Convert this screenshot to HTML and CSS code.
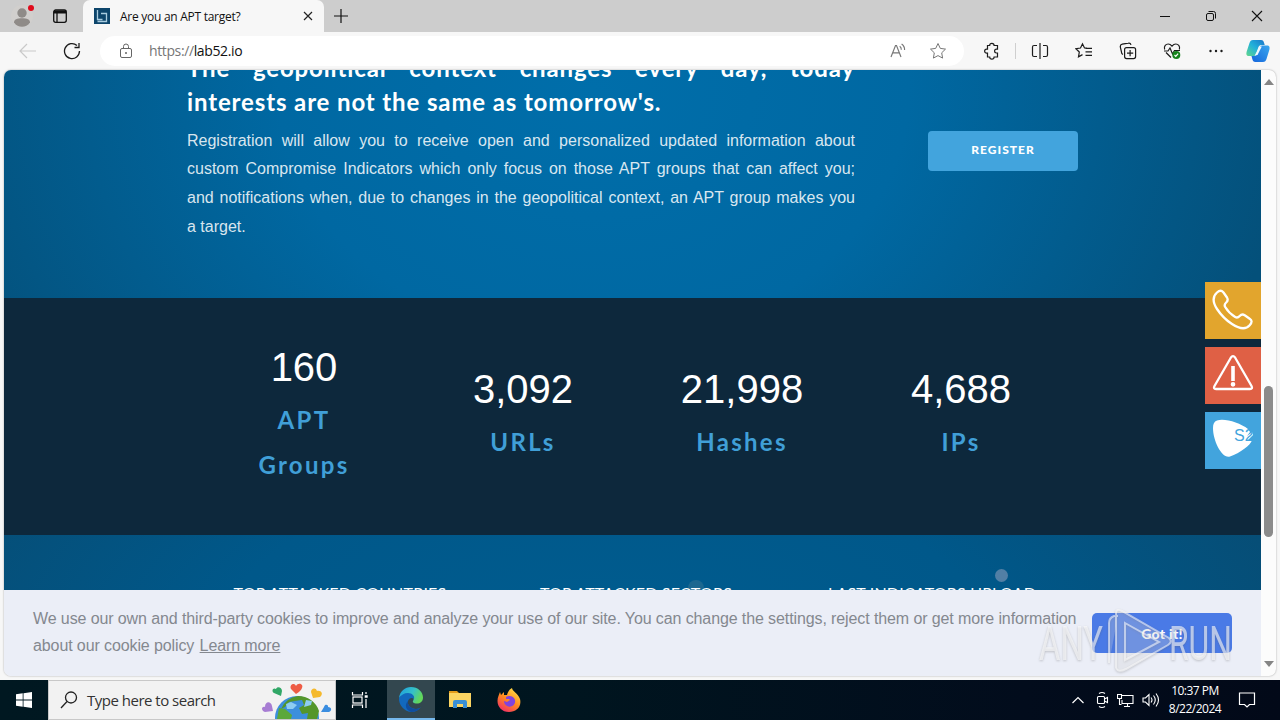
FILE: index.html
```html
<!DOCTYPE html>
<html lang="en">
<head>
    <meta charset="UTF-8">
    <meta name="viewport" content="width=device-width, initial-scale=1.0">
    <title>Are you an APT target?</title>
    <link rel="stylesheet" href="styles.css">
</head>
<body>
    <!-- Tab strip -->
    <div class="tab-strip">
        <div class="profile">
            <svg width="24" height="24" viewBox="0 0 24 24"><circle cx="12" cy="12" r="11" fill="#d1cfcd"/><circle cx="12" cy="9" r="4.7" fill="#8f8b88"/><path d="M4 18.5c0-3 3-4.3 8-4.3s8 1.300 8 4.300c-2 3-4.800 4.300-8 4.300s-6-1.300-8-4.300z" fill="#8f8b88"/><circle cx="21" cy="4" r="3" fill="#e00b1c"/></svg>
        </div>
        <div class="workspaces">
            <svg width="16" height="16" viewBox="0 0 16 16" fill="none" stroke="#111" stroke-width="1.3"><rect x="1.700" y="2" width="12.600" height="12.300" rx="2"/><path d="M2 4h12" stroke-width="3"/><path d="M5 4v10"/></svg>
        </div>
        <div class="tab">
            <svg width="16" height="16" viewBox="0 0 16 16"><path d="M0 0h16v16H0z" fill="#0d456b"/><path d="M3.500 2v9.500h5M7 5.500h5.500v8H3.500" fill="none" stroke="#a9ccdf" stroke-width="1.300"/></svg>
            <span class="tab-title">Are you an APT target?</span>
            <svg width="10" height="10" viewBox="0 0 10 10" stroke="#222" stroke-width="1.200"><path d="M1 1l8 8M9 1L1 9"/></svg>
        </div>
        <div class="new-tab">
            <svg width="14" height="14" viewBox="0 0 14 14" stroke="#111" stroke-width="1.200"><path d="M7 0v14M0 7h14"/></svg>
        </div>
        <div class="window-buttons">
            <svg width="12" height="12" viewBox="0 0 12 12" fill="none" stroke="#111"><path d="M1 6.500h10"/></svg>
            <svg width="12" height="12" viewBox="0 0 12 12" fill="none" stroke="#111"><rect x="1.500" y="3.500" width="7" height="7" rx="1.500"/><path d="M3.500 1.500H8.500a2 2 0 0 1 2 2v5"/></svg>
            <svg width="12" height="12" viewBox="0 0 12 12" fill="none" stroke="#111" stroke-width="1.100"><path d="M1 1l10 10M11 1L1 11"/></svg>
        </div>
    </div>

    <!-- Toolbar -->
    <div class="toolbar">
        <svg class="back" width="18" height="16" viewBox="0 0 18 16" fill="none" stroke="#c9c9c9" stroke-width="1.200"><path d="M8 1L1 8l7 7M1 8h16"/></svg>
        <svg class="reload" width="18" height="18" viewBox="0 0 18 18" fill="none" stroke="#1c1c1c" stroke-width="1.300"><path d="M16.500 9A7.500 7.500 0 1 1 14 3.500M16 1v4.500h-4.500"/></svg>
        <div class="address-bar">
            <svg width="14" height="16" viewBox="0 0 14 16" fill="none" stroke="#666"><rect x="1.500" y="5.500" width="11" height="9" rx="1.500"/><path d="M4.500 5.500V3.500a2.500 2.500 0 0 1 5 0v2"/><circle cx="7" cy="10" r=".6" fill="#666"/></svg>
            <div class="url"><span>https://</span><span class="host">lab52.io</span></div>
            <svg class="read-aloud" width="17" height="16" viewBox="0 0 17 16" fill="none" stroke="#777" stroke-width="1.150"><path d="M1 14L5.500 2.500h1L11 14M2.700 9.800h6.600M9.700 3.200a4 4 0 0 1 1.600 3.500M11.600 1a7 7 0 0 1 3 6"/></svg>
            <svg width="18" height="18" viewBox="0 0 18 18" fill="none" stroke="#777"><path d="M9 1.500l2.300 4.900 5.200.7-3.800 3.700.9 5.300L9 13.600l-4.600 2.500.9-5.300L1.500 7.100l5.200-.7z"/></svg>
        </div>
        <div class="tools">
            <svg width="18" height="18" viewBox="0 0 18 18" fill="none" stroke="#1c1c1c" stroke-width="1.200"><path d="M5.500 3.500h2.200a2.200 2.200 0 0 1 4.400 0h3.400v3.700h-1a1.900 1.900 0 0 0 0 3.800h1v4h-3.400a2.200 2.200 0 0 1-4.400 0H5.500v-3.800h-.8a2.050 2.050 0 0 1 0-4.100h.8z"/></svg>
            <i class="divider"></i>
            <svg width="18" height="18" viewBox="0 0 18 18" fill="none" stroke="#1c1c1c" stroke-width="1.200"><path d="M6 3.500H3a1.500 1.500 0 0 0-1.500 1.500v8A1.500 1.500 0 0 0 3 14.500h3M12 3.500h3A1.500 1.500 0 0 1 16.500 5v8a1.500 1.500 0 0 1-1.500 1.500h-3M9 1v16"/></svg>
            <svg width="18" height="18" viewBox="0 0 18 18" fill="none" stroke="#1c1c1c" stroke-width="1.200"><path d="M12 6H9.500L7.500 1.800 5.500 6l-4.600.7 3.400 3.300-.8 4.800 4-2.200M10.500 6.300H17M10.500 9.800H17M10.500 13.300H17"/></svg>
            <svg width="18" height="18" viewBox="0 0 18 18" fill="none" stroke="#1c1c1c" stroke-width="1.200"><path d="M4 12.500A2.500 2.500 0 0 1 2.500 10L1.300 5a2.500 2.500 0 0 1 2-2.800l6-1.100A2.300 2.300 0 0 1 12 2.800"/><rect x="5.600" y="5.600" width="11" height="11" rx="2"/><path d="M11.100 8v6.200M8 11.100h6.200"/></svg>
            <svg width="18" height="18" viewBox="0 0 18 18" fill="none" stroke="#1c1c1c" stroke-width="1.200"><path d="M1.600 7.500C.7 4 3 2 5.200 2 7 2 8.200 3.200 9 4.200 9.800 3.200 11 2 12.800 2 15 2 17.300 4 16.400 7.500M3 10.500l5 5M1 9h4l2-3 2.500 6 2-3.500H17"/><circle cx="13.300" cy="13" r="4" fill="#16831c" stroke="none"/><path d="M11.500 13l1.300 1.400 2.300-2.700" stroke="#fff"/></svg>
            <svg width="18" height="18" viewBox="0 0 18 18" fill="#1c1c1c"><circle cx="3.500" cy="9" r="1.200"/><circle cx="9" cy="9" r="1.200"/><circle cx="14.500" cy="9" r="1.200"/></svg>
            <svg class="copilot" width="24" height="24" viewBox="0 0 24 24">
                <defs>
                    <linearGradient id="cp1" x1="1" y1="0" x2="0" y2="1"><stop offset="0" stop-color="#1a74c9"/><stop offset=".5" stop-color="#22b1da"/><stop offset="1" stop-color="#62d78b"/></linearGradient>
                    <linearGradient id="cp2" x1="1" y1="0" x2="0" y2="1"><stop offset="0" stop-color="#39a7ee"/><stop offset="1" stop-color="#1565dc"/></linearGradient>
                </defs>
                <path d="M7 1h8c2 0 2.600 1 3.100 3l.6 2h-3c-2 0-3 1-3.600 3l-2 6c-.5 1.500-1.300 2-3 2H3c-2.700 0-3-2-2.300-4.500L3.500 4C4.200 2 5 1 7 1z" fill="url(#cp1)"/>
                <path d="M17 23H9.500c-2 0-2.700-1-3.200-3L5.500 17h2.800c2 0 2.800-1 3.400-3l2-5.500C14.300 7 15 6.500 17 6.500h4c2.600 0 3 2 2.300 4.500L20.500 20c-.7 2-1.500 3-3.500 3z" fill="url(#cp2)"/>
                <path d="M13.500 7.500h2.300L11.500 16H9z" fill="#eef9ff"/>
            </svg>
        </div>
    </div>

    <!-- Web page -->
    <div class="browser-view">
        <div class="page">
            <section class="hero">
                <div class="hero-text">
                    <h2><span class="line full">The geopolitical context changes every day, today</span><span class="line">interests are not the same as tomorrow's.</span></h2>
                    <p>
                        <span class="line full">Registration will allow you to receive open and personalized updated information about</span>
                        <span class="line full">custom Compromise Indicators which only focus on those APT groups that can affect you;</span>
                        <span class="line full">and notifications when, due to changes in the geopolitical context, an APT group makes you</span>
                        <span class="line">a target.</span>
                    </p>
                </div>
                <button class="register">REGISTER</button>
            </section>

            <section class="stats">
                <div class="stat">
                    <div class="number">160</div>
                    <div class="label">APT<br>Groups</div>
                </div>
                <div class="stat">
                    <div class="number">3,092</div>
                    <div class="label">URLs</div>
                </div>
                <div class="stat">
                    <div class="number">21,998</div>
                    <div class="label">Hashes</div>
                </div>
                <div class="stat">
                    <div class="number">4,688</div>
                    <div class="label">IPs</div>
                </div>
            </section>

            <section class="rankings">
                <i class="particle faint"></i>
                <i class="particle"></i>
                <h3>TOP ATTACKED COUNTRIES</h3>
                <h3>TOP ATTACKED SECTORS</h3>
                <h3>LAST INDICATORS UPLOAD</h3>
            </section>

            <div class="cookie-bar">
                <div class="cookie-text">
                    <span class="line">We use our own and third-party cookies to improve and analyze your use of our site. You can change the settings, reject them or get more information</span>
                    <span class="line">about our cookie policy <a>Learn more</a></span>
                </div>
                <button class="accept">Got it!</button>
            </div>

            <div class="side-tabs">
                <div class="side-tab phone">
                    <svg width="42" height="42" viewBox="0 0 42 42" fill="none" stroke="#fff" stroke-width="2.300" stroke-linejoin="round"><path d="M5 3.500C8 .8 10 1.500 11.500 3.500l3.500 5c1.200 2 .5 3.800-.8 5-1.700 1.500-2.200 2.500-1 4.500 2.500 4.200 5.800 7.500 10 10 2 1.200 3 .7 4.500-1 1.200-1.300 3-2 5-.8l5 3.500c2.300 1.500 2.700 3.500 0 6.500-3.500 4-9.700 4-17.700-1.200C13 30.500 9 26 5 20 .2 12.500 1 7 5 3.500z"/></svg>
                </div>
                <div class="side-tab alert">
                    <svg width="42" height="42" viewBox="0 0 42 42" fill="none" stroke="#fff" stroke-width="2.300" stroke-linejoin="round"><path d="M18.800 3.700L2.500 32q-1.500 3 1.500 3h34Q41 35 39.500 32L23.200 3.700q-2.200-3.200-4.400 0z"/><path d="M21 12v15" stroke-width="3.600"/><circle cx="21" cy="30.300" r="1.200"/></svg>
                </div>
                <div class="side-tab s2">
                    <svg width="42" height="42" viewBox="0 0 42 42"><path d="M5 1.500C13-1 28 4 36 10l2 3-3 4 5.500-4L41 16l-5 5h4c-1 5-12 13-22 16.500C10 40 1 22 1 9c0-4 1-6.500 4-7.500z" fill="#fff"/><text x="22" y="21.500">S2</text></svg>
                </div>
            </div>
        </div>
        <div class="scrollbar">
            <i class="arrow up"></i>
            <i class="thumb"></i>
            <i class="arrow down"></i>
        </div>
    </div>

    <!-- Taskbar -->
    <div class="taskbar">
        <div class="task start">
            <svg width="16" height="16" viewBox="0 0 16 16" fill="#fff"><path d="M0 2.200l6.700-.9v6.300H0zM7.500 1.200L16 0v7.600H7.500zM0 8.400h6.700v6.300L0 13.800zM7.500 8.400H16V16l-8.500-1.200z"/></svg>
        </div>
        <div class="search">
            <svg width="18" height="18" viewBox="0 0 18 18" fill="none" stroke="#222" stroke-width="1.300"><circle cx="11" cy="6.500" r="5.500"/><path d="M7 10.500L1 17"/></svg>
            <span>Type here to search</span>
            <svg class="globe" width="72" height="38" viewBox="0 0 72 38">
                <circle cx="36" cy="37" r="22" fill="#3d8fdc"/>
                <path d="M37 15a22 22 0 0 1 21 15l-2 8H46l1-6-6 1-3-6 5-3-2-5-7 1-6 1-4 5-4 2a22 22 0 0 1 17-13z" fill="#54962a"/>
                <path d="M18 27l6 1 7 6-1 4H16z" fill="#5ba83a"/><path d="M25 23l5-2 6 3-4 4h-6zM45 19l6 1-1 4-7 2z" fill="#8ecdf2"/>
                <path d="M35 13l-5-5c-2-4 3-7 5-3 2-4 8-2 6 2q-1 3-6 6z" fill="#ee5c45"/>
                <path d="M20 15l-7-3c-3-2-1-6 2-4 1-3 6-2 6 2z" fill="#31a766"/>
                <path d="M52 17l-2-6c0-4 5-5 6-1 4-1 7 3 3 6z" fill="#f5b92c"/>
                <path d="M12 30l-8 1c-4-1-4-6 0-5 0-6 6-6 7-1z" fill="#a77dd3"/>
                <path d="M60 31l3-5c1-4 5-2 4 0 4 0 4 4 1 5z" fill="#3a8de0"/>
            </svg>
        </div>
        <div class="task view">
            <svg width="18" height="18" viewBox="0 0 18 18" fill="none" stroke="#fff" stroke-width="1.200"><path d="M1.500 1v3h10V1M1.500 17v-3h10v3M15 1v2M15 8v9"/><rect x="2" y="6" width="9" height="6"/><path d="M13.700 5.500h3" stroke-width="2.500"/></svg>
        </div>
        <div class="task active">
            <svg width="26" height="26" viewBox="0 0 26 26">
                <defs><linearGradient id="edge" x1="0" y1="0" x2="1" y2=".4"><stop offset="0" stop-color="#1b9de2"/><stop offset=".6" stop-color="#35c1c8"/><stop offset="1" stop-color="#62d75b"/></linearGradient></defs>
                <path d="M1 12C2 5 7 1 13 1c7 0 12 5 12 10.500 0 4-3 6-6 6-3.500 0-5-1.500-3.700-3C17 11 14 8 10 8c-4 0-7 2-9 4z" fill="url(#edge)"/>
                <path d="M1 12c2-3 5-5 9-5 4 0 7 3 6 6-2-2-5-1-6 2-1 4 3 8 8 8 2 0 4-1 5-2-2 3-6 5-10 5C6 25 .5 19 1 12z" fill="#1269bd"/>
                <path d="M10 15c-1 4 3 8 8 8 2 0 4-1 5-2-2 3-6 5-10 5-5-2-7-7-3-11z" fill="#104d9d"/>
            </svg>
        </div>
        <div class="task">
            <svg width="22" height="20" viewBox="0 0 22 20"><path d="M0 1h8l2 2H0z" fill="#e39b1a"/><path d="M0 3h22v14H0z" fill="#fbd462"/><path d="M4 18v-6q0-2 2-2h10q2 0 2 2v6h-4v-4H8v4z" fill="#3a8fd4"/></svg>
        </div>
        <div class="task">
            <svg width="24" height="26" viewBox="0 0 24 26">
                <defs><linearGradient id="fox" x1=".8" y1="0" x2=".2" y2="1"><stop offset="0" stop-color="#ffe24a"/><stop offset=".5" stop-color="#ff8a1f"/><stop offset="1" stop-color="#f0296a"/></linearGradient></defs>
                <path d="M3 5l1 3 3-3v3h3c1-4 3-6 5-7 0 3 6 5 8 11 2 8-4 13-11 13C5 25 .5 20 .5 14 .5 10 2 8 3 5z" fill="url(#fox)"/>
                <path d="M9 10c3-2 8-1 9 3 1 5-4 8-8 6-2-1-3-3-3-5l3 1 3-2-1-1H9z" fill="#8043dd"/>
            </svg>
        </div>
        <div class="tray">
            <svg width="12" height="8" viewBox="0 0 12 8" fill="none" stroke="#fff" stroke-width="1.200"><path d="M.5 7L6 1.500 11.500 7"/></svg>
            <svg class="meet" width="13" height="18" viewBox="0 0 13 18" fill="none" stroke="#fff" stroke-width="1.100"><rect x="1.500" y="5.500" width="7" height="7" rx="1"/><path d="M8.500 8l3-1.500v5l-3-1.500M3 2.500Q6 .5 9 2.500M3 15.500q3 2 6 0"/></svg>
            <svg width="17" height="16" viewBox="0 0 17 16" fill="none" stroke="#fff" stroke-width="1.100"><path d="M5 3.500h11v8H5V8M10.500 11.500v3M7 14.500h6M.5 2.500h4v4h-4zM2.500 6.500v6h2"/></svg>
            <svg width="18" height="16" viewBox="0 0 18 16" fill="none" stroke="#fff" stroke-width="1.100"><path d="M1 6h2.500L7 2.500v11L3.500 10H1zM9 5.500q2 2.500 0 5M11.500 3.500q3.500 4.500 0 9M14 1.500q5 6.500 0 13"/></svg>
            <div class="clock">10:37 PM<br>8/22/2024</div>
            <svg class="notify" width="18" height="18" viewBox="0 0 18 18" fill="none" stroke="#fff" stroke-width="1.200"><path d="M1.500 2h15v11.500h-5L9 16l-2.500-2.500h-5z"/></svg>
        </div>
    </div>

    <!-- Watermark -->
    <svg class="watermark" width="200" height="66" viewBox="0 0 200 66">
        <text x="3" y="52" textLength="64" lengthAdjust="spacingAndGlyphs">ANY</text>
        <path d="M73 55V15q0-5 5-7h4M80 60V5q0-5 6-2l47 27q4 4-1 7L90 61q-8 4-10-1M89 15l34 19-34 18z"/>
        <text x="133" y="52" textLength="63" lengthAdjust="spacingAndGlyphs">RUN</text>
    </svg>
</body>
</html>
```
FILE: styles.css
```css
* {
    margin: 0;
    padding: 0;
    box-sizing: border-box;
}

body {
    position: relative;
    width: 1280px;
    height: 720px;
    overflow: hidden;
    display: flex;
    flex-direction: column;
    background: #f7f7f7;
    font-family: "Open Sans", "Noto Sans", sans-serif;
}

svg {
    display: block;
    flex: none;
}

button {
    border: 0;
    color: #fff;
    font-family: Lato, sans-serif;
    font-weight: 900;
}

.line {
    display: block;
    white-space: nowrap;
}

.line.full {
    text-align-last: justify;
}

/* Tab strip */
.tab-strip {
    height: 32px;
    flex: none;
    display: flex;
    align-items: center;
    background: #cdcdcd;
}

.profile {
    width: 42px;
    padding-left: 10px;
}

.workspaces {
    width: 41px;
    padding-left: 10px;
}

.tab {
    width: 241px;
    height: 32px;
    padding: 0 11px;
    display: flex;
    align-items: center;
    background: #f7f7f7;
    border-radius: 7px 7px 0 0;
}

.tab-title {
    flex: 1;
    margin-left: 10px;
    font-size: 12px;
    letter-spacing: -0.27px;
    color: #111;
}

.new-tab {
    margin-left: 10px;
}

.window-buttons {
    margin-left: auto;
    padding-right: 17px;
    display: flex;
    gap: 34px;
}

/* Toolbar */
.toolbar {
    height: 38px;
    flex: none;
    display: flex;
    align-items: center;
    background: #f7f7f7;
}

.back {
    margin-left: 19px;
}

.reload {
    margin-left: 26px;
}

.address-bar {
    width: 864px;
    height: 30px;
    margin-left: 19px;
    padding: 0 17px 0 19px;
    display: flex;
    align-items: center;
    background: #fff;
    border-radius: 15px;
}

.url {
    flex: 1;
    display: flex;
    margin-left: 16px;
    font-size: 14px;
    line-height: 20px;
    letter-spacing: -0.38px;
    color: #767676;
}

.host {
    color: #111;
}

.read-aloud {
    margin-right: 22px;
}

.tools {
    flex: 1;
    display: flex;
    align-items: center;
    justify-content: space-between;
    padding: 0 10px 0 18px;
}

.divider {
    width: 1px;
    height: 16px;
    margin: 0 -11px;
    background: #cfcfcf;
}

.copilot {
    margin-left: -5px;
}

/* Web page */
.browser-view {
    width: 1272px;
    height: 606px;
    margin: 0 4px 4px;
    flex: none;
    display: flex;
    overflow: hidden;
    border-radius: 7px;
    background: #fcfcfc;
    box-shadow: 0 0 2px rgba(0, 0, 0, 0.35);
}

.page {
    position: relative;
    width: 1257px;
    height: 606px;
    overflow: hidden;
}

.hero {
    height: 228px;
    display: flex;
    align-items: flex-start;
    padding-left: 183px;
    background: radial-gradient(ellipse 700px 560px at 590px 20px, #006eaa 0%, #0068a2 45%, #04507a 100%);
    color: #fff;
}

.hero-text {
    width: 668px;
    margin-top: -19px;
}

.hero h2 {
    font-family: Lato, sans-serif;
    font-size: 24px;
    font-weight: 700;
    line-height: 34px;
    letter-spacing: 0.87px;
}

.hero p {
    margin-top: 7.6px;
    font-family: "Liberation Sans", Arial, sans-serif;
    font-size: 16px;
    line-height: 28.7px;
    color: rgba(255, 255, 255, 0.86);
}

.register {
    width: 150px;
    height: 40px;
    margin: 61px 0 0 73px;
    padding-bottom: 3px;
    border-radius: 4px;
    background: #42a4dd;
    font-size: 12px;
    letter-spacing: 1px;
}

.stats {
    height: 237px;
    padding: 0 190.5px 2px;
    display: grid;
    grid-template-columns: repeat(4, 219px);
    align-items: center;
    background: #0d283c;
    text-align: center;
}

.number {
    margin-bottom: 8px;
    font-family: "Liberation Sans", Arial, sans-serif;
    font-size: 40px;
    line-height: 44px;
    color: #fff;
}

.label {
    font-family: Lato, sans-serif;
    font-size: 24px;
    font-weight: 700;
    line-height: 45px;
    letter-spacing: 2.3px;
    color: #409fd7;
}

.rankings {
    position: relative;
    height: 55px;
    overflow: hidden;
    display: grid;
    grid-template-columns: repeat(3, 296px);
    padding: 48px 0 0 188px;
    background: radial-gradient(ellipse 750px 300px at 600px 90px, #005c8f 0%, #00588a 50%, #074c73 100%);
    text-align: center;
}

.rankings h3 {
    position: relative;
    font-family: Lato, sans-serif;
    font-size: 16px;
    font-weight: 400;
    line-height: 20px;
    letter-spacing: 0.2px;
    color: #fff;
    white-space: nowrap;
}

.particle {
    position: absolute;
    left: 991px;
    top: 34px;
    width: 13px;
    height: 13px;
    border-radius: 50%;
    background: #527fa5;
}

.particle.faint {
    left: 684px;
    top: 45px;
    width: 16px;
    height: 16px;
    background: #1c6890;
}

.cookie-bar {
    height: 86px;
    padding: 0 29px;
    display: flex;
    align-items: center;
    justify-content: space-between;
    background: #ebeef7;
}

.cookie-text {
    width: 1043px;
    padding-bottom: 2px;
    font-family: "Liberation Sans", Arial, sans-serif;
    font-size: 16px;
    line-height: 27px;
    letter-spacing: -0.105px;
    color: #84888f;
}

.cookie-text a {
    margin-left: 1px;
    text-decoration: underline;
}

.accept {
    width: 140px;
    height: 40px;
    border-radius: 5px;
    background: #4a7ae6;
    font-size: 14px;
    letter-spacing: 0.3px;
}

/* Floating contact buttons */
.side-tabs {
    position: absolute;
    right: 0;
    top: 212px;
    display: flex;
    flex-direction: column;
    gap: 8px;
}

.side-tab {
    width: 56px;
    height: 57px;
    padding: 7px;
}

.phone {
    background: #e2a52d;
}

.alert {
    background: #df6045;
}

.s2 {
    background: #42a4dd;
}

.s2 text {
    font-family: "Liberation Sans", sans-serif;
    font-size: 16px;
    fill: #42a4dd;
}

/* Scrollbar */
.scrollbar {
    width: 15px;
    display: flex;
    flex-direction: column;
    align-items: center;
}

.arrow {
    border: 5px solid transparent;
}

.arrow.up {
    border-bottom-color: #858585;
    border-top-width: 0;
    border-bottom-width: 6px;
    margin-top: 9px;
}

.arrow.down {
    margin: auto 0 9px;
    border-top-color: #858585;
    border-bottom-width: 0;
    border-top-width: 6px;
}

.thumb {
    width: 9px;
    height: 151px;
    margin-top: 301px;
    border-radius: 5px;
    background: #8b8b8b;
}

/* Taskbar */
.taskbar {
    height: 40px;
    flex: none;
    display: flex;
    background: linear-gradient(90deg, #001821 0%, #00151f 45%, #020c1c 80%, #020918 100%);
    color: #fff;
}

.task {
    width: 49px;
    height: 40px;
    display: flex;
    align-items: center;
    justify-content: center;
}

.task.start {
    width: 48px;
}

.task.view {
    width: 47px;
    margin-right: 4px;
}

.task.active {
    width: 48px;
    background: #33474f;
    border-bottom: 2px solid #76b9ed;
}

.search {
    width: 288px;
    padding-left: 11px;
    display: flex;
    align-items: center;
    background: #f2f2f2;
    border: 1px solid #c8c8c8;
    color: #333;
    font-size: 15px;
    letter-spacing: -0.5px;
}

.search span {
    margin-left: 9px;
    white-space: nowrap;
}

.globe {
    margin-left: auto;
    margin-right: 2px;
}

.tray {
    margin-left: auto;
    padding-right: 24px;
    display: flex;
    align-items: center;
}

.tray svg + svg {
    margin-left: 8px;
}

.tray svg + svg.meet {
    margin-left: 12px;
}

.clock {
    width: 70px;
    font-size: 12px;
    line-height: 18px;
    letter-spacing: -0.5px;
    text-align: center;
}

.notify {
    margin-left: 8px;
}

/* Watermark */
.watermark {
    position: absolute;
    left: 1036px;
    top: 608px;
    filter: drop-shadow(0 1px 1px rgba(90, 90, 90, 0.5));
}

.watermark text {
    font-family: Roboto, sans-serif;
    font-size: 48px;
    fill: rgba(255, 255, 255, 0.6);
}

.watermark path {
    fill: rgba(255, 255, 255, 0.2);
    stroke: rgba(255, 255, 255, 0.55);
    stroke-width: 2;
}
```
